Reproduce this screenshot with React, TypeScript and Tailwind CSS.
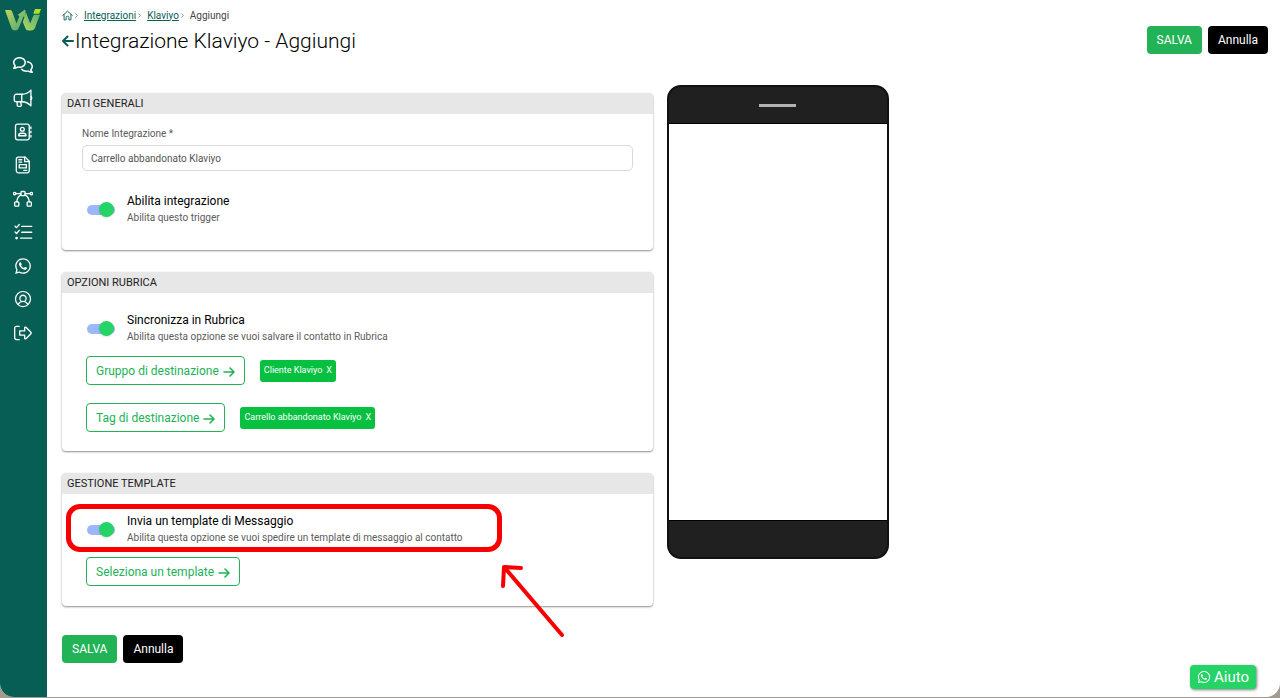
import type { ReactNode } from 'react'
import { FaRegComments, FaWhatsapp } from 'react-icons/fa6'
import { PiUserCircle } from 'react-icons/pi'
import { ChevronRight } from 'lucide-react'

function StrokeIcon({ children }: { children: ReactNode }) {
  return (
    <svg
      viewBox="0 0 24 24"
      className="h-5 w-5"
      fill="none"
      stroke="currentColor"
      strokeWidth="1.6"
      strokeLinecap="round"
      strokeLinejoin="round"
      aria-hidden="true"
    >
      {children}
    </svg>
  )
}

function MegaphoneIcon() {
  return (
    <StrokeIcon>
      <path d="M4 7.5h6.5v9H4A2.5 2.5 0 0 1 1.5 14v-4A2.5 2.5 0 0 1 4 7.5z" />
      <path d="M10.5 7.5c4.5 0 8-1.5 11-5v19c-3-3.5-6.5-5-11-5" />
      <path d="M21.5 10.3c1.3.5 1.3 2.9 0 3.4" />
      <path d="M5 16.5v4c0 1 .6 1.5 1.5 1.5h2.2c1 0 1.5-.7 1.3-1.6l-.8-3.9" />
    </StrokeIcon>
  )
}

function AddressBookIcon() {
  return (
    <StrokeIcon>
      <rect x="3" y="2.5" width="16.500" height="19" rx="2.5" />
      <circle cx="11.200" cy="8.700" r="2.300" />
      <path d="M6.800 16.500c0-2 1.300-3 3-3h2.800c1.700 0 3 1 3 3zM21.500 6v2M21.500 11v2M21.500 16v2" />
    </StrokeIcon>
  )
}

function DocumentIcon() {
  return (
    <StrokeIcon>
      <path d="M6.5 2.5h8l5 5v11.5a2.5 2.5 0 0 1-2.5 2.5H6.5A2.5 2.5 0 0 1 4 19V5a2.5 2.5 0 0 1 2.5-2.5z" />
      <path d="M14 2.5V8h5.5M7 5.7h3.5M7 8.5h3.5M7.5 11.5h8.5v4H7.5zM13 18.5h3.5" />
    </StrokeIcon>
  )
}

function BezierIcon() {
  return (
    <StrokeIcon>
      <rect x="9.5" y="3" width="5" height="5" rx="1" />
      <circle cx="2" cy="5.5" r="1.5" />
      <circle cx="22" cy="5.5" r="1.5" />
      <rect x="2" y="15.5" width="5" height="5" rx="1" />
      <rect x="17" y="15.5" width="5" height="5" rx="1" />
      <path d="M3.5 5.5h6M14.5 5.5h6M9.5 7c-3 1.5-4.7 4.5-5 8.5M14.5 7c3 1.5 4.7 4.5 5 8.5" />
    </StrokeIcon>
  )
}

function ChecklistIcon() {
  return (
    <StrokeIcon>
      <path d="M2.5 5l1.8 1.8L7.5 3M2.5 12l1.8 1.8L7.5 10M10.5 5.3h12M10.5 12.3h12M9 19.3h13.5" />
      <circle cx="4.3" cy="19.3" r="0.8" fill="currentColor" />
    </StrokeIcon>
  )
}

function ExitIcon() {
  return (
    <StrokeIcon>
      <path d="M7.5 4H4.5A2.5 2.5 0 0 0 2 6.5v11A2.5 2.5 0 0 0 4.5 20h3" />
      <path d="M8 9.5h6V5.8c0-.8.9-1.2 1.5-.6l6 6c.4.4.4 1.2 0 1.6l-6 6c-.6.6-1.5.2-1.5-.6v-3.7H8z" />
    </StrokeIcon>
  )
}

function HomeIcon() {
  return (
    <svg
      viewBox="0 0 24 24"
      className="h-[11px] w-[11px]"
      fill="none"
      stroke="currentColor"
      strokeWidth="2"
      strokeLinejoin="round"
      strokeLinecap="round"
      aria-hidden="true"
    >
      <path d="M1.5 12 12 2.5 22.5 12M4.5 10v11.5H9v-5a3 3 0 0 1 6 0v5h4.5V10" />
    </svg>
  )
}

function BackArrow() {
  return (
    <svg viewBox="0 0 12 12" className="h-3 w-3" fill="none" stroke="currentColor" strokeWidth="2" strokeLinecap="round" strokeLinejoin="round" aria-hidden="true">
      <path d="M11 6H1.2M5.5 1.5 1 6l4.5 4.5" />
    </svg>
  )
}

function ForwardArrow() {
  return (
    <svg viewBox="0 0 12 12" className="mt-[2px] h-3 w-3" fill="none" stroke="currentColor" strokeWidth="1.6" strokeLinecap="round" strokeLinejoin="round" aria-hidden="true">
      <path d="M1 6h9.8M7 2l4 4-4 4" />
    </svg>
  )
}

function Logo() {
  return (
    <svg viewBox="0 0 36 22" className="h-[22px] w-9" aria-label="Wi" role="img">
      <defs>
        <linearGradient id="logo-left" x1="0" y1="0" x2="1" y2="1">
          <stop offset="0" stopColor="#c5d45a" />
          <stop offset="1" stopColor="#45a878" />
        </linearGradient>
        <linearGradient id="logo-right" x1="0" y1="1" x2="1" y2="0">
          <stop offset="0" stopColor="#b5d65c" />
          <stop offset="1" stopColor="#52b079" />
        </linearGradient>
      </defs>
      <path d="M21 3.5l4.2 11 2.8-7c.5-1.3 1.2-1.7 2.5-1.7H35l-5 13c-.8 2-1.7 2.7-3.8 2.7h-2.5c-2 0-2.8-.8-3.4-2.5L17.8 13z" fill="url(#logo-right)" />
      <path d="M0 1h4.5c1.5 0 2.3.6 2.8 2l4.2 11.5L14.5 7l-2-1L20 .5c1 2.5.8 5 .3 8L18.5 7.5 14 18.5c-.8 2-1.8 3-3.8 3-2.2 0-3.2-.8-3.9-2.7L1 4C.7 3 .5 2 0 1z" fill="url(#logo-left)" />
      <path d="M30 0h6l-1.8 4.8h-5.9z" fill="#b6dc1e" />
    </svg>
  )
}

const menu = [
  { label: 'Chat', icon: <FaRegComments className="h-5 w-5" /> },
  { label: 'Campagne', icon: <MegaphoneIcon /> },
  { label: 'Rubrica', icon: <AddressBookIcon /> },
  { label: 'Template', icon: <DocumentIcon /> },
  { label: 'Flussi', icon: <BezierIcon /> },
  { label: 'Attività', icon: <ChecklistIcon /> },
  { label: 'WhatsApp', icon: <FaWhatsapp className="h-[18px] w-[18px]" /> },
  { label: 'Profilo', icon: <PiUserCircle className="h-5 w-5" /> },
  { label: 'Esci', icon: <ExitIcon /> },
]

function Sidebar() {
  return (
    <aside className="flex w-[47px] shrink-0 flex-col items-center bg-[#075e54] pt-[9px] pr-[2px] text-white">
      <Logo />
      <nav className="mt-5 flex h-[295px] flex-col justify-between">
        {menu.map((item) => (
          <a key={item.label} href="#" aria-label={item.label} className="flex h-[27px] items-center justify-center">
            {item.icon}
          </a>
        ))}
      </nav>
    </aside>
  )
}

function Card({ title, children }: { title: string; children: ReactNode }) {
  return (
    <section className="rounded-[4px] bg-white shadow-[0_1px_2px_rgba(0,0,0,0.45)]">
      <h2 className="h-[21px] rounded-t-[4px] bg-[#e7e7e7] px-[5px] text-[11px] leading-[21px] text-[#222]">{title}</h2>
      {children}
    </section>
  )
}

function Toggle({ id, title, text }: { id: string; title: string; text: string }) {
  return (
    <div className="flex items-center gap-3">
      <span className="relative flex h-4 w-7 shrink-0 items-center">
        <input
          id={id}
          type="checkbox"
          defaultChecked
          className="peer h-[10px] w-full cursor-pointer appearance-none rounded-full bg-gray-300 checked:bg-[#9ab8fb]"
        />
        <span className="pointer-events-none absolute left-0 h-[15px] w-[15px] rounded-full bg-white shadow-sm peer-checked:left-3 peer-checked:bg-[#25d366]" />
      </span>
      <label htmlFor={id} className="flex flex-col">
        <span className="text-[12px] leading-4 text-black">{title}</span>
        <span className="text-[10px] leading-[17px] text-[#5c5c5c]">{text}</span>
      </label>
    </div>
  )
}

function OutlineButton({ children }: { children: ReactNode }) {
  return (
    <button
      type="button"
      className="flex h-[29px] items-center gap-1 rounded-[4px] border border-[#22b356] bg-white px-[9px] text-[12px] text-[#22b356]"
    >
      {children}
      <ForwardArrow />
    </button>
  )
}

function Chip({ children }: { children: ReactNode }) {
  return (
    <span className="flex h-[22px] items-center gap-1 rounded-[3px] bg-[#06c13f] px-1 text-[9px] text-white">
      {children}
      <button type="button" aria-label="Rimuovi">X</button>
    </span>
  )
}

function FormActions() {
  return (
    <div className="flex gap-[6px]">
      <button type="submit" className="h-7 rounded-[4px] bg-[#22b356] px-[10px] text-[12px] text-white">SALVA</button>
      <button type="button" className="h-7 rounded-[4px] bg-black px-[10px] text-[12px] text-white">Annulla</button>
    </div>
  )
}

function PhonePreview() {
  return (
    <div className="flex h-[474px] w-[222px] shrink-0 flex-col overflow-hidden rounded-[14px] border-2 border-[#111] bg-[#202020]">
      <div className="flex h-9 items-center justify-center">
        <span className="h-[3px] w-[37px] bg-[#b5b0b2]" />
      </div>
      <div className="flex-1 border-y border-black bg-white" />
      <div className="h-9" />
    </div>
  )
}

export default function App() {
  return (
    <div className="min-h-screen bg-[#a39a90] pb-px font-['Roboto',sans-serif]">
      <div className="relative flex min-h-[calc(100vh-1px)] overflow-hidden rounded-b-[14px] bg-white">
        <Sidebar />
        <main className="flex min-w-0 flex-1 flex-col pr-3 pl-[15px]">
          <header className="flex items-start justify-between pt-2">
            <div>
              <nav aria-label="Breadcrumb" className="flex h-[14px] items-center text-[10px] text-[#444]">
                <a href="#" aria-label="Home" className="text-[#075e54]"><HomeIcon /></a>
                <ChevronRight className="mr-1 h-[7px] w-[7px]" />
                <a href="#" className="text-[#075e54] underline">Integrazioni</a>
                <ChevronRight className="mr-1 h-[7px] w-[7px]" />
                <a href="#" className="text-[#075e54] underline">Klaviyo</a>
                <ChevronRight className="mr-1 h-[7px] w-[7px]" />
                <span>Aggiungi</span>
              </nav>
              <div className="mt-[5px] flex items-center gap-px">
                <a href="#" aria-label="Indietro" className="text-[#075e54]"><BackArrow /></a>
                <h1 className="text-[21px] leading-7 font-light text-black">Integrazione Klaviyo - Aggiungi</h1>
              </div>
            </div>
            <div className="pt-[18px]">
              <FormActions />
            </div>
          </header>

          <div className="mt-[30px] flex items-start gap-[14px]">
            <form className="flex w-[49%] flex-col gap-[22px] pt-2" onSubmit={(e) => e.preventDefault()}>
              <Card title="DATI GENERALI">
                <div className="flex flex-col px-5 pt-3 pb-6">
                  <label htmlFor="nome" className="text-[10px] leading-4 text-[#5c5c5c]">Nome Integrazione *</label>
                  <input
                    id="nome"
                    type="text"
                    defaultValue="Carrello abbandonato Klaviyo"
                    className="mt-[3px] h-[26px] w-full rounded-[5px] border border-[#d9d9d9] px-2 text-[10px] text-[#555]"
                  />
                  <div className="mt-[22px] pl-[5px]">
                    <Toggle id="abilita" title="Abilita integrazione" text="Abilita questo trigger" />
                  </div>
                </div>
              </Card>

              <Card title="OPZIONI RUBRICA">
                <div className="flex flex-col px-6 pt-[19px] pb-[19px]">
                  <div className="pl-px">
                    <Toggle id="rubrica" title="Sincronizza in Rubrica" text="Abilita questa opzione se vuoi salvare il contatto in Rubrica" />
                  </div>
                  <div className="mt-[11px] flex items-center gap-[15px]">
                    <OutlineButton>Gruppo di destinazione</OutlineButton>
                    <Chip>Cliente Klaviyo</Chip>
                  </div>
                  <div className="mt-[18px] flex items-center gap-[15px]">
                    <OutlineButton>Tag di destinazione</OutlineButton>
                    <Chip>Carrello abbandonato Klaviyo</Chip>
                  </div>
                </div>
              </Card>

              <Card title="GESTIONE TEMPLATE">
                <div className="flex flex-col items-start px-6 pt-[19px] pb-5">
                  <div className="relative pl-px">
                    <Toggle id="template" title="Invia un template di Messaggio" text="Abilita questa opzione se vuoi spedire un template di messaggio al contatto" />
                    {/* tutorial highlight */}
                    <span className="pointer-events-none absolute -top-[9px] -right-[39px] -bottom-[6px] -left-5 rounded-[14px] border-[5px] border-[#f80000]" />
                    <svg
                      className="pointer-events-none absolute top-[50px] -right-[104px] h-[76px] w-[66px]"
                      viewBox="0 0 66 76"
                      fill="none"
                      stroke="#f80000"
                      strokeWidth="4"
                      strokeLinecap="round"
                      strokeLinejoin="round"
                      aria-hidden="true"
                    >
                      <path d="M3 4 61 72M20 5 3 4 2 23" />
                    </svg>
                  </div>
                  <div className="mt-[11px]">
                    <OutlineButton>Seleziona un template</OutlineButton>
                  </div>
                </div>
              </Card>

              <div className="pt-[7px] pb-8">
                <FormActions />
              </div>
            </form>
            <PhonePreview />
          </div>
        </main>

        <button
          type="button"
          className="absolute right-6 bottom-2 flex h-6 items-center gap-[3px] rounded-[4px] bg-[#25d366] px-[7px] text-[15px] text-white shadow-[1px_1px_3px_rgba(0,0,0,0.5)]"
        >
          <FaWhatsapp className="h-[14px] w-[14px]" />
          Aiuto
        </button>
      </div>
    </div>
  )
}
